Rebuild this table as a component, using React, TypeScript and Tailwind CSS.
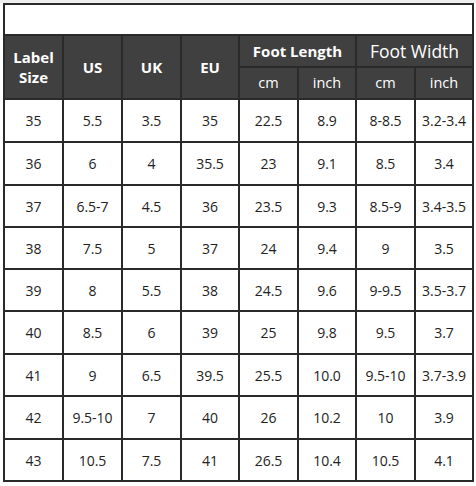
import React from "react";

const rows: string[][] = [
  ["35", "5.5", "3.5", "35", "22.5", "8.9", "8-8.5", "3.2-3.4"],
  ["36", "6", "4", "35.5", "23", "9.1", "8.5", "3.4"],
  ["37", "6.5-7", "4.5", "36", "23.5", "9.3", "8.5-9", "3.4-3.5"],
  ["38", "7.5", "5", "37", "24", "9.4", "9", "3.5"],
  ["39", "8", "5.5", "38", "24.5", "9.6", "9-9.5", "3.5-3.7"],
  ["40", "8.5", "6", "39", "25", "9.8", "9.5", "3.7"],
  ["41", "9", "6.5", "39.5", "25.5", "10.0", "9.5-10", "3.7-3.9"],
  ["42", "9.5-10", "7", "40", "26", "10.2", "10", "3.9"],
  ["43", "10.5", "7.5", "41", "26.5", "10.4", "10.5", "4.1"],
];

const heights = ["h-[43px]", "h-[43px]", "h-[42px]", "h-[42px]", "h-[42px]", "h-[43px]", "h-[42px]", "h-[43px]", "h-[42px]"];

export default function App() {
  return (
    <div className="w-[476px] h-[486px] bg-white overflow-hidden" style={{ fontFamily: '"Open Sans", "Noto Sans", sans-serif' }}>
      <div className="h-[3px] bg-[#efefef]" />
      <table className="ml-[3px] w-[469px] table-fixed border-collapse text-center">
        <colgroup>
          <col className="w-[59px]" />
          <col className="w-[59px]" />
          <col className="w-[59px]" />
          <col className="w-[58px]" />
          <col className="w-[59px]" />
          <col className="w-[58px]" />
          <col className="w-[59px]" />
          <col className="w-[58px]" />
        </colgroup>
        <tbody>
          <tr className="h-[31px]">
            <td colSpan={8} className="border-2 border-[#2a2a2a] bg-white" />
          </tr>
          <tr className="h-[32px] bg-[#404040] text-white">
            <td rowSpan={2} className="border-2 border-[#2a2a2a] text-[15px] font-bold leading-[20px]">
              Label
              <br />
              Size
            </td>
            <td rowSpan={2} className="border-2 border-[#2a2a2a] text-[15px] font-bold">US</td>
            <td rowSpan={2} className="border-2 border-[#2a2a2a] text-[15px] font-bold">UK</td>
            <td rowSpan={2} className="border-2 border-[#2a2a2a] text-[15px] font-bold">EU</td>
            <td colSpan={2} className="border-2 border-[#2a2a2a] text-[15px] font-bold">Foot Length</td>
            <td colSpan={2} className="border-2 border-[#2a2a2a] text-[17.5px]">Foot Width</td>
          </tr>
          <tr className="h-[32px] bg-[#404040] text-white text-[14.5px]">
            <td className="border-2 border-[#2a2a2a]">cm</td>
            <td className="border-2 border-[#2a2a2a]">inch</td>
            <td className="border-2 border-[#2a2a2a]">cm</td>
            <td className="border-2 border-[#2a2a2a]">inch</td>
          </tr>
          {rows.map((r, i) => (
            <tr key={i} className={`${heights[i]} text-[14px] text-[#222]`}>
              {r.map((c, j) => (
                <td key={j} className="border-2 border-[#2a2a2a] whitespace-nowrap px-0">
                  {c}
                </td>
              ))}
            </tr>
          ))}
        </tbody>
      </table>
    </div>
  );
}
